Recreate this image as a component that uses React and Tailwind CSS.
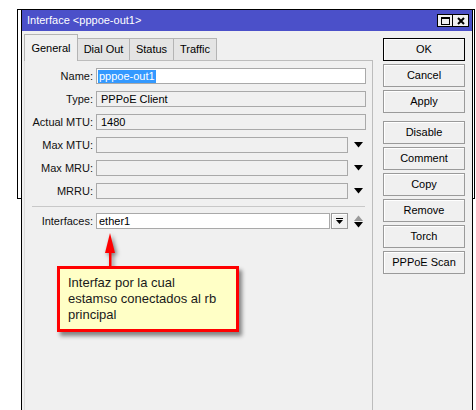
import React from 'react';

const font = { fontFamily: '"Liberation Sans", Arial, sans-serif' };

function DownArrow() {
  return (
    <svg width="9" height="6" viewBox="0 0 9 6" className="block">
      <polygon points="0,0 9,0 4.5,5.5" fill="#000" />
    </svg>
  );
}

function UpDown() {
  return (
    <svg width="9" height="13" viewBox="0 0 9 13" className="block">
      <polygon points="4.5,0.5 9,6 0,6" fill="#9a9a9a" />
      <polygon points="0,7 9,7 4.5,12.5" fill="#000" />
    </svg>
  );
}

function Field({ label, children }) {
  return (
    <div className="flex items-center h-[16px]">
      <div className="w-[68px] text-right text-[11px] text-[#111] leading-none">{label}</div>
      <div className="ml-[3px] flex items-center">{children}</div>
    </div>
  );
}

function Box({ w, white, children }) {
  return (
    <div
      className={`h-[16px] border border-[#a9a9a9] pl-[2px] flex items-center text-[11px] text-black leading-none ${
        white ? 'bg-white' : 'bg-[#f0f0f0]'
      }`}
      style={{ width: w }}
    >
      {children}
    </div>
  );
}

function Btn({ label, primary }) {
  return (
    <div
      className={`h-[23px] w-[82px] flex items-center justify-center text-[11px] text-black bg-[#f0f0f0] border shadow-[inset_1px_1px_0_#fff] ${
        primary ? 'border-black' : 'border-[#9a9a9a]'
      }`}
    >
      {label}
    </div>
  );
}

export default function App() {
  const tabs = ['Dial Out', 'Status', 'Traffic'];
  return (
    <div className="relative w-[476px] h-[410px] bg-white overflow-hidden" style={font}>
      {/* window behind */}
      <div className="absolute left-[17px] top-[9px] w-[458px] h-[190px] border border-black" />

      {/* dialog */}
      <div className="absolute left-[21px] top-[9px] w-[452px] h-[402px] border-t border-x border-black bg-[#f0f0f0] flex flex-col">
        <div className="h-[21px] bg-[#4b50c9] flex items-center pl-[5px] pr-[3px]">
          <span className="text-[11px] text-white leading-none flex-1">Interface &lt;pppoe-out1&gt;</span>
          <div className="flex">
            <div className="w-[16px] h-[13px] bg-[#f0f0f0] border border-black flex items-center justify-center">
              <div className="w-[9px] h-[8px] border border-black border-t-2" />
            </div>
            <div className="w-[16px] h-[13px] bg-[#f0f0f0] border border-black border-l-0 flex items-center justify-center">
              <svg width="8" height="8" viewBox="0 0 8 8">
                <path d="M1 1 L7 7 M7 1 L1 7" stroke="#000" strokeWidth="2" />
              </svg>
            </div>
          </div>
        </div>

        <div className="flex flex-1">
          {/* left: tabs + panel */}
          <div className="ml-[2px] mt-[2px] w-[349px] flex flex-col">
            <div className="flex items-end h-[27px]">
              <div className="relative z-10 -mb-px h-[27px] w-[54px] border-t border-x border-[#b4b4b4] bg-[#f0f0f0] flex items-center justify-center text-[11px] text-black">
                General
              </div>
              {tabs.map((t, i) => (
                <div
                  key={t}
                  className={`h-[22px] border-t border-r border-[#b4b4b4] bg-[#e4e4e4] flex items-center justify-center text-[11px] text-black ${
                    i === 0 ? 'w-[52px]' : i === 1 ? 'w-[44px]' : 'w-[43px]'
                  }`}
                >
                  {t}
                </div>
              ))}
            </div>
            <div className="flex-1 border-t border-r border-l border-[#bcbcbc] border-l-[#dcdcdc] pt-[7px] flex flex-col">
              <div className="flex flex-col gap-[7px]">
                <Field label="Name:">
                  <Box w={270} white>
                    <span className="bg-[#3399ff] text-white px-[1px] py-[1px] -ml-[1px]">pppoe-out1</span>
                  </Box>
                </Field>
                <Field label="Type:">
                  <Box w={270}><span className="pl-[2px]">PPPoE Client</span></Box>
                </Field>
                <Field label="Actual MTU:">
                  <Box w={270}><span className="pl-[2px]">1480</span></Box>
                </Field>
                {['Max MTU:', 'Max MRU:', 'MRRU:'].map((l) => (
                  <Field key={l} label={l}>
                    <Box w={252} />
                    <div className="ml-[6px]">
                      <DownArrow />
                    </div>
                  </Field>
                ))}
              </div>
              <div className="mt-[7px] ml-[7px] w-[333px] h-px bg-[#c8c8c8]" />
              <div className="mt-[6px]">
                <Field label="Interfaces:">
                  <Box w={234} white>ether1</Box>
                  <div className="ml-px w-[17px] h-[16px] border border-[#9a9a9a] bg-[#f0f0f0] shadow-[inset_1px_1px_0_#fff] flex flex-col items-center justify-center">
                    <div className="w-[7px] h-px bg-black mb-px" />
                    <svg width="7" height="5" viewBox="0 0 7 5" className="block">
                      <polygon points="0,0 7,0 3.5,4" fill="#000" />
                    </svg>
                  </div>
                  <div className="ml-[6px]">
                    <UpDown />
                  </div>
                </Field>
              </div>
            </div>
          </div>

          {/* right: buttons */}
          <div className="ml-[10px] mt-[7px] flex flex-col gap-[3px]">
            <Btn label="OK" primary />
            <Btn label="Cancel" />
            <Btn label="Apply" />
            <div className="mt-[5px] flex flex-col gap-[3px]">
              <Btn label="Disable" />
              <Btn label="Comment" />
              <Btn label="Copy" />
              <Btn label="Remove" />
              <Btn label="Torch" />
              <Btn label="PPPoE Scan" />
            </div>
          </div>
        </div>
      </div>

      {/* annotation arrow */}
      <svg
        className="absolute left-[100px] top-[232px] drop-shadow-[2px_2px_2px_rgba(0,0,0,0.5)]"
        width="22"
        height="36"
        viewBox="0 0 22 36"
      >
        <polygon points="10,1 15,21 5,21" fill="#ff0000" />
        <rect x="9" y="18" width="2.5" height="18" fill="#ff0000" />
      </svg>

      {/* annotation callout */}
      <div className="absolute left-[57px] top-[266px] w-[182px] h-[66px] border-[3px] border-[#ff0000] bg-[#ffffc6] shadow-[3px_4px_4px_rgba(0,0,0,0.45)] pl-[8px] pt-[6px]">
        <p className="text-[13px] leading-[16px] text-[#1a1a1a]">
          Interfaz por la cual
          <br />
          estamso conectados al rb
          <br />
          principal
        </p>
      </div>
    </div>
  );
}
